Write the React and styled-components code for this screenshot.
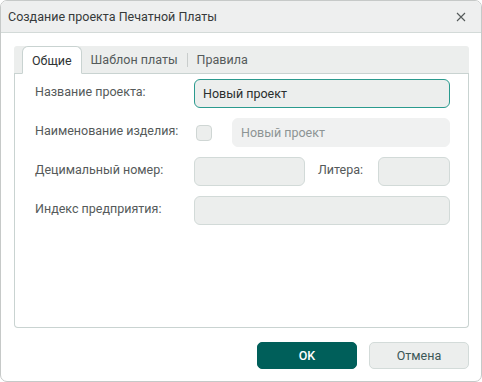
import React from "react";
import styled, { createGlobalStyle } from "styled-components";

const Global = createGlobalStyle`
  html, body { margin: 0; padding: 0; background: #ffffff; }
  body { font-family: Roboto, "Noto Sans", sans-serif; }
  * { box-sizing: border-box; }
`;

const Window = styled.div`
  width: 482px;
  height: 382px;
  border: 1px solid #c6c9c8;
  border-radius: 7px;
  overflow: hidden;
  background: #ffffff;
  display: flex;
  flex-direction: column;
`;

const TitleBar = styled.div`
  height: 32px;
  flex: none;
  background: #eeefef;
  border-bottom: 1px solid #d3dad8;
  display: flex;
  align-items: center;
  justify-content: space-between;
  padding: 0 14px 0 7px;
`;

const Title = styled.div`
  font-size: 12.5px;
  color: #363a3a;
`;

const CloseButton = styled.button`
  border: none;
  background: none;
  padding: 0;
  width: 12px;
  height: 12px;
  display: flex;
  align-items: center;
  justify-content: center;
  cursor: pointer;
`;

const Body = styled.div`
  flex: 1;
  display: flex;
  flex-direction: column;
  padding: 13px 12px 12px 13px;
`;

const TabStrip = styled.div`
  height: 28px;
  flex: none;
  background: #eceeed;
  border-radius: 3px 3px 0 0;
  border-bottom: 1px solid #c9d3d1;
  display: flex;
  align-items: flex-end;
  padding-left: 8px;
`;

const Tab = styled.div`
  height: ${(p) => (p.$active ? "28px" : "27px")};
  margin-bottom: ${(p) => (p.$active ? "-1px" : "0")};
  padding: 0 9px;
  display: flex;
  align-items: center;
  font-size: 12.5px;
  color: ${(p) => (p.$active ? "#303434" : "#555b5b")};
  background: ${(p) => (p.$active ? "#ffffff" : "transparent")};
  border: ${(p) => (p.$active ? "1px solid #c9d3d1" : "none")};
  border-bottom: ${(p) => (p.$active ? "1px solid #ffffff" : "none")};
  border-radius: 6px 6px 0 0;
`;

const TabSeparator = styled.div`
  width: 1px;
  height: 14px;
  background: #c9cdcc;
  align-self: center;
  margin-top: 1px;
`;

const Panel = styled.div`
  height: 254px;
  flex: none;
  border: 1px solid #c9d3d1;
  border-top: none;
  border-radius: 0 0 4px 4px;
  padding: 5px 18px 0 20px;
  display: grid;
  grid-template-columns: 159px 1fr;
  grid-auto-rows: 29px;
  row-gap: 10px;
  align-content: start;
`;

const Label = styled.div`
  font-size: 12.5px;
  color: #555a5a;
  display: flex;
  align-items: center;
  padding-bottom: 4px;
`;

const Field = styled.div`
  height: 29px;
  border-radius: 6px;
  background: ${(p) => (p.$disabled ? "#f0f1f1" : "#eceeed")};
  border: ${(p) =>
    p.$focused ? "1px solid #2a9a8e" : p.$disabled ? "1px solid #f0f1f1" : "1px solid #d2dad8"};
  display: flex;
  align-items: center;
  padding: 0 8px;
  font-size: 12.5px;
  color: ${(p) => (p.$disabled ? "#8d9494" : "#2a2e2e")};
  width: ${(p) => (p.$width ? p.$width + "px" : "auto")};
  flex: ${(p) => (p.$width ? "none" : "1")};
`;

const Row = styled.div`
  display: flex;
  align-items: center;
`;

const Checkbox = styled.div`
  width: 16px;
  height: 16px;
  margin-left: 2px;
  margin-right: 20px;
  border-radius: 4px;
  border: 1px solid #cfd6d4;
  background: #eceeed;
  flex: none;
`;

const InlineLabel = styled.div`
  font-size: 12.5px;
  color: #555a5a;
  margin: 0 13px 4px 13px;
  flex: 1;
`;

const Footer = styled.div`
  display: flex;
  justify-content: flex-end;
  gap: 12px;
  margin-top: 14px;
`;

const Button = styled.button`
  width: 100px;
  height: 27px;
  border-radius: 5px;
  font-family: Roboto, "Noto Sans", sans-serif;
  font-size: 12.5px;
  cursor: pointer;
  background: ${(p) => (p.$primary ? "#005f5a" : "#eceeed")};
  color: ${(p) => (p.$primary ? "#ffffff" : "#3b5757")};
  border: 1px solid ${(p) => (p.$primary ? "#005f5a" : "#d3dbd9")};
  font-weight: ${(p) => (p.$primary ? 500 : 400)};
`;

export default function App() {
  return (
    <>
      <Global />
      <Window>
        <TitleBar>
          <Title>Создание проекта Печатной Платы</Title>
          <CloseButton aria-label="Закрыть">
            <svg width="10" height="10" viewBox="0 0 10 10">
              <path d="M1 1 L9 9 M9 1 L1 9" stroke="#555a5a" strokeWidth="1.1" fill="none" />
            </svg>
          </CloseButton>
        </TitleBar>
        <Body>
          <TabStrip>
            <Tab $active>Общие</Tab>
            <Tab>Шаблон платы</Tab>
            <TabSeparator />
            <Tab>Правила</Tab>
          </TabStrip>
          <Panel>
            <Label>Название проекта:</Label>
            <Field $focused>Новый проект</Field>

            <Label>Наименование изделия:</Label>
            <Row>
              <Checkbox />
              <Field $disabled>Новый проект</Field>
            </Row>

            <Label>Децимальный номер:</Label>
            <Row>
              <Field $width={111} />
              <InlineLabel>Литера:</InlineLabel>
              <Field $width={72} />
            </Row>

            <Label>Индекс предприятия:</Label>
            <Field />
          </Panel>
          <Footer>
            <Button $primary>OK</Button>
            <Button>Отмена</Button>
          </Footer>
        </Body>
      </Window>
    </>
  );
}
